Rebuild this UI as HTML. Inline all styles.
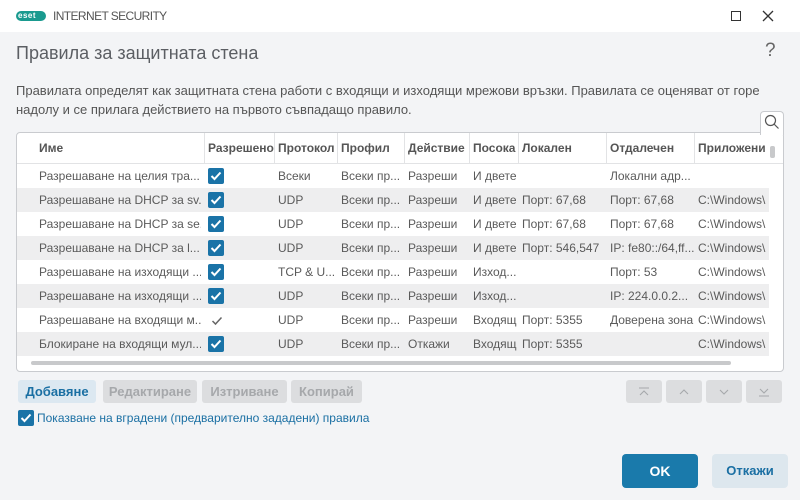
<!DOCTYPE html>
<html><head><meta charset="utf-8"><style>
*{box-sizing:border-box;margin:0;padding:0}
body{width:800px;height:500px;overflow:hidden;background:#f3f4f6;font-family:"Liberation Sans","DejaVu Sans",sans-serif;position:relative;color:#444}
.a{position:absolute}
.tb{left:0;top:0;width:800px;height:32px;background:#fff}
.tbl{left:16px;top:132px;width:768px;height:240px;background:#fff;border:1px solid #c9cbcf;border-radius:4px;overflow:hidden}
.hd{position:absolute;left:0;top:0;height:31px;width:768px;border-bottom:1px solid #e2e3e5;font-weight:bold;font-size:12px;color:#555}
.hd div{position:absolute;top:0;height:30px;line-height:30px;border-left:1px solid #e2e3e5;padding-left:3px;white-space:nowrap;overflow:hidden}
.row{position:absolute;left:0;width:752px;height:24px;font-size:12px;color:#5a5a5a}
.row.g{background:#eeeeef}
.row div{position:absolute;top:0;line-height:24px;white-space:nowrap;overflow:hidden}
.cb{display:inline-block;width:16px;height:16px;background:#1a73a7;border-radius:2px;position:absolute;top:4px}
.cb svg{position:absolute;left:2px;top:3px}
.btn{top:380px;height:23px;border-radius:3px;font-size:13px;font-weight:bold;text-align:center;line-height:23px;background:#dcdddf;color:#a6a8ab}
.nb{top:380px;height:23px;width:36px;border-radius:3px;background:#dcdddf}
</style></head><body>
<div class="a tb"></div>
<div class="a" style="left:16px;top:11px;width:30px;height:10px;border:1.5px solid #1a9a8f;border-radius:5px;background:#1a9a8f"></div>
<div class="a" style="left:18px;top:10px;font-size:8px;font-weight:bold;color:#fff;letter-spacing:0.5px;line-height:12px">eset</div>
<div class="a" style="left:53px;top:9px;font-size:12px;color:#555;letter-spacing:-0.6px">INTERNET SECURITY</div>
<div class="a" style="left:731px;top:11px;width:10px;height:10px;border:1.3px solid #333"></div>
<svg class="a" style="left:762px;top:10px" width="12" height="12"><path d="M1 1L11 11M11 1L1 11" stroke="#333" stroke-width="1.3"/></svg>
<div class="a" style="left:16px;top:43px;font-size:18px;color:#5b5e63">Правила за защитната стена</div>
<div class="a" style="left:765px;top:40px;font-size:19px;color:#666">?</div>
<div class="a" style="left:16px;top:81px;font-size:13px;line-height:19px;color:#555;width:775px">Правилата определят как защитната стена работи с входящи и изходящи мрежови връзки. Правилата се оценяват от горе надолу и се прилага действието на първото съвпадащо правило.</div>
<div class="a" style="left:760px;top:111px;width:24px;height:24px;background:#fff;border:1px solid #c9cbcf;border-bottom:none;border-radius:4px 4px 0 0;z-index:2"></div>
<svg class="a" style="left:764px;top:114px;z-index:3" width="16" height="16"><circle cx="6.5" cy="6.5" r="5" fill="none" stroke="#555" stroke-width="1.2"/><path d="M10 10L14.5 14.5" stroke="#555" stroke-width="1.2"/></svg>
<div class="a tbl">
<div class="hd">
<div style="left:0;width:187px;border-left:none;padding-left:22px">Име</div>
<div style="left:187px;width:70px">Разрешено</div>
<div style="left:257px;width:63px">Протокол</div>
<div style="left:320px;width:67px">Профил</div>
<div style="left:387px;width:65px">Действие</div>
<div style="left:452px;width:49px">Посока</div>
<div style="left:501px;width:88px">Локален</div>
<div style="left:589px;width:88px">Отдалечен</div>
<div style="left:677px;width:72px">Приложени</div>
</div>
<div class="a" style="left:753px;top:13px;width:5px;height:12px;background:#c8c9cb;border-radius:2px"></div>
<div id="rows"></div>
<div class="a" style="left:14px;top:228px;width:700px;height:4px;background:#c8c9cb;border-radius:2px"></div>
</div>
<div class="a btn" style="left:18px;width:78px;background:#dce8f1;color:#1a6fa3">Добавяне</div>
<div class="a btn" style="left:103px;width:94px">Редактиране</div>
<div class="a btn" style="left:202px;width:85px">Изтриване</div>
<div class="a btn" style="left:291px;width:71px">Копирай</div>
<div class="a nb" style="left:626px"></div><div class="a nb" style="left:666px"></div><div class="a nb" style="left:706px"></div><div class="a nb" style="left:746px"></div>
<svg class="a" style="left:626px;top:380px" width="160" height="23" fill="none" stroke="#a6a8ab" stroke-width="1.1"><path d="M13 8H23M14 15L18 11L22 15"/><path d="M54 14L58 10L62 14"/><path d="M94 10L98 14L102 10"/><path d="M134 9L138 13L142 9M133 16H143"/></svg>
<div class="a" style="left:18px;top:410px;width:16px;height:16px;background:#1a73a7;border-radius:2px"></div>
<svg class="a" style="left:20px;top:413px" width="12" height="10"><path d="M1.5 5L4.5 8L10.5 1.5" stroke="#fff" stroke-width="2" fill="none"/></svg>
<div class="a" style="left:37px;top:411px;font-size:12px;color:#1a6fa3">Показване на вградени (предварително зададени) правила</div>
<div class="a" style="left:622px;top:454px;width:76px;height:34px;background:#1a7aab;border-radius:4px;color:#fff;font-weight:bold;font-size:14px;text-align:center;line-height:34px">OK</div>
<div class="a" style="left:712px;top:454px;width:76px;height:34px;background:#dde7ee;border-radius:4px;color:#1a6fa3;font-weight:bold;font-size:13px;text-align:center;line-height:34px">Откажи</div>
<script>
var d=[["Разрешаване на целия тра...",1,"Всеки","Всеки пр...","Разреши","И двете","","Локални адр...",""],
["Разрешаване на DHCP за sv...",1,"UDP","Всеки пр...","Разреши","И двете","Порт: 67,68","Порт: 67,68","C:\\Windows\\"],
["Разрешаване на DHCP за se...",1,"UDP","Всеки пр...","Разреши","И двете","Порт: 67,68","Порт: 67,68","C:\\Windows\\"],
["Разрешаване на DHCP за l...",1,"UDP","Всеки пр...","Разреши","И двете","Порт: 546,547","IP: fe80::/64,ff...","C:\\Windows\\"],
["Разрешаване на изходящи ...",1,"TCP & U...","Всеки пр...","Разреши","Изход...","","Порт: 53","C:\\Windows\\"],
["Разрешаване на изходящи ...",1,"UDP","Всеки пр...","Разреши","Изход...","","IP: 224.0.0.2...","C:\\Windows\\"],
["Разрешаване на входящи м...",2,"UDP","Всеки пр...","Разреши","Входящ","Порт: 5355","Доверена зона","C:\\Windows\\"],
["Блокиране на входящи мул...",1,"UDP","Всеки пр...","Откажи","Входящ","Порт: 5355","","C:\\Windows\\"]];
var L=[22,0,261,324,391,456,505,593,681],W=[162,0,60,64,62,48,86,86,70],h="";
d.forEach(function(r,i){h+='<div class="row'+(i%2?' g':'')+'" style="top:'+(31+i*24)+'px">';
for(var j=0;j<9;j++){if(j==1){h+=r[1]==1?'<span class="cb" style="left:191px"><svg width="12" height="10"><path d="M1.5 5L4.5 8L10.5 1.5" stroke="#fff" stroke-width="2" fill="none"/></svg></span>':'<svg style="position:absolute;left:194px;top:8px" width="12" height="10"><path d="M1.5 5L4.5 8L10.5 1.5" stroke="#666" stroke-width="1.5" fill="none"/></svg>';continue;}
h+='<div style="left:'+L[j]+'px;width:'+W[j]+'px">'+r[j]+'</div>';}
h+='</div>';});
document.getElementById('rows').innerHTML=h;
</script>
</body></html>
